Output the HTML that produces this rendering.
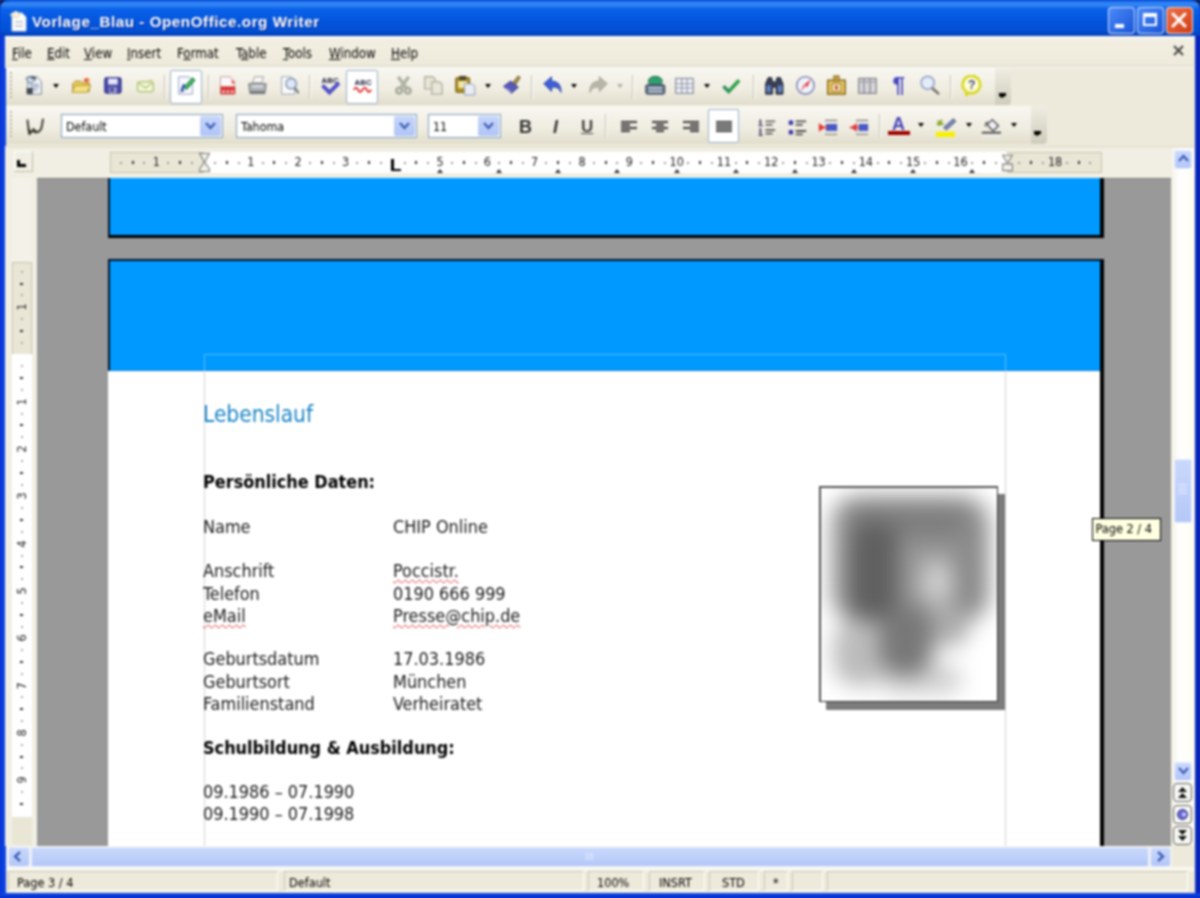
<!DOCTYPE html><html><head><meta charset="utf-8"><title>Vorlage_Blau - OpenOffice.org Writer</title><style>
html,body{margin:0;padding:0}
html{background:#0a3ad8;overflow:hidden}
body{width:1200px;height:898px;overflow:hidden;position:relative;background:#eeeadb;filter:blur(.9px);font-family:"DejaVu Sans Condensed","Liberation Sans",sans-serif;font-size:13px;color:#000}
div,span,svg{position:absolute;box-sizing:border-box}
.t{white-space:nowrap;line-height:1}
.t u{text-decoration:underline;text-underline-offset:1px}
#title{left:0;top:0;width:1200px;height:36px;background:linear-gradient(#0a5be0 0,#3a8cf5 4px,#0a62ea 9px,#0456dd 20px,#0350d6 30px,#0240b8 36px)}
#bl{left:0;top:36px;width:5.5px;height:862px;background:linear-gradient(90deg,#0834d4,#1048e8)}
#br{left:1194.5px;top:36px;width:5.5px;height:862px;background:linear-gradient(90deg,#0c30cc,#0618a4)}
#bb{left:0;top:892.5px;width:1200px;height:5.5px;background:linear-gradient(#1048e8,#0830c8)}
.wb{top:7px;width:27px;height:27px;border:1.5px solid rgba(255,255,255,.8);border-radius:4px}
.tb{background:linear-gradient(#f8f7f1,#efece0 60%,#e2decd);border-radius:0 4px 4px 0}
.sep{width:2px;height:24px;border-left:1px solid #c5c2b2;border-right:1px solid #fff}
.arr{width:0;height:0;border:3.5px solid transparent;border-top:4px solid #000;border-bottom:0}
.box{border:1px solid #98b0c8;background:#fff;border-radius:2px}
.combo{height:24.5px;border:1px solid #7f9db9;background:#fff}
.combo .btn{right:1px;top:1px;width:21px;height:20.5px;background:linear-gradient(#c6d6fb,#b0c4f5);border-radius:2px}
.doc{left:37px;top:177.5px;width:1133.5px;height:668px;background:#999;overflow:hidden}
.bt{font-size:17.9px;color:#1a1a1a}
.sq{text-decoration:underline wavy #e03030 1px;text-underline-offset:2px}
.sbtn{width:21px;height:20px;background:linear-gradient(#c9d8fc,#b4c7f7);border:1px solid #e8eeff;border-radius:3px}
.sf{top:871px;height:20px;border:1px solid #c9c5b2;border-right-color:#fff;border-bottom-color:#fff}
</style></head><body>
<div id="title"></div><div id="bl"></div><div id="br"></div><div id="bb"></div>
<div style="left:0;top:0;width:8px;height:8px;background:radial-gradient(circle at 100% 100%,transparent 7px,#0a1430 8.5px)"></div><div style="left:1192px;top:0;width:8px;height:8px;background:radial-gradient(circle at 0 100%,transparent 7px,#0a1430 8.5px)"></div>
<div style="left:5px;top:36px;width:1190px;height:30px;background:linear-gradient(#fdfcf8,#f2eee1 4px,#eeeadb)"></div>
<svg style="left:7px;top:8.5px" width="23" height="24" viewBox="0 0 23 24"><path d="M5 4h10l4 4v14H5z" fill="#fdfdf5" stroke="#cfd6e8"/><path d="M3 6l6-4 4 3-3 4z" fill="#f4f2e4" stroke="#d8d2b0"/><rect x="8" y="12" width="8" height="2" fill="#c8cfe0"/><rect x="8" y="16" width="8" height="2" fill="#c8cfe0"/></svg>
<span class="t" style="left:32px;top:13px;font:bold 15.2px 'Liberation Sans',sans-serif;letter-spacing:.55px;color:#fff;text-shadow:1px 1px 1px #0a2a8a">Vorlage_Blau - OpenOffice.org Writer</span>
<div class="wb" style="left:1108px;background:linear-gradient(135deg,#4a8af8,#1a55d8)"><div style="left:6px;top:16px;width:9px;height:4px;background:#fff"></div></div>
<div class="wb" style="left:1137px;background:linear-gradient(135deg,#4a8af8,#1a55d8)"><div style="left:5px;top:5px;width:14px;height:13px;border:2px solid #fff;border-top-width:4px"></div></div>
<div class="wb" style="left:1166px;background:linear-gradient(135deg,#ee7048,#d03c14)"><svg style="left:4px;top:4px" width="16" height="16" viewBox="0 0 16 16"><path d="M2 2l12 12M14 2L2 14" stroke="#fff" stroke-width="3" stroke-linecap="round"/></svg></div>
<span class="t" style="left:12px;top:47px;font-size:13.2px"><u>F</u>ile</span>
<span class="t" style="left:47px;top:47px;font-size:13.2px"><u>E</u>dit</span>
<span class="t" style="left:84px;top:47px;font-size:13.2px"><u>V</u>iew</span>
<span class="t" style="left:127px;top:47px;font-size:13.2px"><u>I</u>nsert</span>
<span class="t" style="left:177px;top:47px;font-size:13.2px">F<u>o</u>rmat</span>
<span class="t" style="left:236px;top:47px;font-size:13.2px">T<u>a</u>ble</span>
<span class="t" style="left:283px;top:47px;font-size:13.2px"><u>T</u>ools</span>
<span class="t" style="left:329px;top:47px;font-size:13.2px"><u>W</u>indow</span>
<span class="t" style="left:391px;top:47px;font-size:13.2px"><u>H</u>elp</span>
<svg style="left:1171px;top:43px" width="16" height="16" viewBox="0 0 16 16"><path d="M3 3l9 9M12 3L3 12" stroke="#444" stroke-width="2"/></svg>
<div style="left:5px;top:66px;width:1189px;height:1px;background:#d8d4c2"></div><div style="left:5px;top:67px;width:1189px;height:1px;background:#fff"></div>
<div class="tb" style="left:6px;top:68px;width:1005px;height:37px"></div>
<div class="tb" style="left:6px;top:106px;width:1041px;height:38px"></div>
<div style="left:10px;top:72px;width:2px;height:2px;background:#b8b4a0"></div>
<div style="left:10px;top:76px;width:2px;height:2px;background:#b8b4a0"></div>
<div style="left:10px;top:80px;width:2px;height:2px;background:#b8b4a0"></div>
<div style="left:10px;top:84px;width:2px;height:2px;background:#b8b4a0"></div>
<div style="left:10px;top:88px;width:2px;height:2px;background:#b8b4a0"></div>
<div style="left:10px;top:92px;width:2px;height:2px;background:#b8b4a0"></div>
<div style="left:10px;top:96px;width:2px;height:2px;background:#b8b4a0"></div>
<div style="left:10px;top:111px;width:2px;height:2px;background:#b8b4a0"></div>
<div style="left:10px;top:115px;width:2px;height:2px;background:#b8b4a0"></div>
<div style="left:10px;top:119px;width:2px;height:2px;background:#b8b4a0"></div>
<div style="left:10px;top:123px;width:2px;height:2px;background:#b8b4a0"></div>
<div style="left:10px;top:127px;width:2px;height:2px;background:#b8b4a0"></div>
<div style="left:10px;top:131px;width:2px;height:2px;background:#b8b4a0"></div>
<div style="left:10px;top:135px;width:2px;height:2px;background:#b8b4a0"></div>
<div style="left:995px;top:68px;width:16px;height:37px;background:linear-gradient(#efede2,#cfccbc);border-radius:0 4px 4px 0"></div><div style="left:998.5px;top:92.5px;width:7px;height:3px;background:#000"></div><div class="arr" style="left:999px;top:95.5px;border-width:3px;border-top-width:2.5px"></div>
<div style="left:1031px;top:106px;width:16px;height:38px;background:linear-gradient(#efede2,#cfccbc);border-radius:0 4px 4px 0"></div><div style="left:1033.5px;top:131px;width:7px;height:3px;background:#000"></div><div class="arr" style="left:1034px;top:134px;border-width:3px;border-top-width:2.5px"></div>
<svg style="left:23.6px;top:75.1px" width="20.9" height="20.9" viewBox="0 0 24 24"><path d="M4 2h11l5 5v15H4z" fill="#eef2f8" stroke="#6a7888"/><path d="M2 4l8-3 3 5-6 4z" fill="#cfdcee" stroke="#506078"/><path d="M7 11h10M7 14h10M7 17h8" stroke="#8a98b0" stroke-width="1.5"/><rect x="3" y="15" width="7" height="7" fill="#404850"/><path d="M8 3l6 1" stroke="#404850" stroke-width="2"/></svg>
<div class="arr" style="left:52.5px;top:84px"></div>
<svg style="left:70.6px;top:75.1px" width="20.9" height="20.9" viewBox="0 0 24 24"><path d="M2 10l3-3h6l2 2h8v10H2z" fill="#e8c860" stroke="#a08020"/><path d="M1 20l4-8h18l-5 8z" fill="#f4e080" stroke="#b09030"/><path d="M14 6q4-5 8 0l-3 1 1 3z" fill="#e86030"/></svg>
<svg style="left:101.6px;top:75.1px" width="20.9" height="20.9" viewBox="0 0 24 24"><rect x="3" y="3" width="19" height="18" rx="2" fill="#4848a8" stroke="#28287a"/><rect x="7" y="4" width="11" height="7" fill="#e4e4f8"/><rect x="8" y="14" width="9" height="7" fill="#9898d0"/><rect x="10" y="15" width="3" height="4" fill="#303070"/></svg>
<svg style="left:134.6px;top:75.1px" width="20.9" height="20.9" viewBox="0 0 24 24"><rect x="3" y="8" width="18" height="11" rx="2" fill="#f4f6e0" stroke="#a8c060" stroke-width="1.5"/><path d="M4 9l8 6 8-6" fill="none" stroke="#a8c060" stroke-width="1.3"/><path d="M15 6.5l5 0" stroke="#d0d890" stroke-width="2"/></svg>
<div class="sep" style="left:164px;top:75px"></div>
<div class="box" style="left:170px;top:70px;width:32px;height:34px"></div>
<svg style="left:175.6px;top:75.1px" width="20.9" height="20.9" viewBox="0 0 24 24"><path d="M3 2h12l4 4v16H3z" fill="#f8f8ff" stroke="#8898b8"/><path d="M5 18l3-8 6 3z" fill="#3050c0"/><path d="M9 14L19 3l3 3L12 17z" fill="#40b060" stroke="#207838"/><path d="M5 20l2-4 3 2z" fill="#203080"/></svg>
<div class="sep" style="left:208px;top:75px"></div>
<svg style="left:216.6px;top:75.1px" width="20.9" height="20.9" viewBox="0 0 24 24"><path d="M4 2h11l5 5v15H4z" fill="#fafafa" stroke="#c09090"/><path d="M12 2q6 3 5 8l4-1z" fill="#e04040"/><rect x="4" y="13" width="17" height="9" fill="#d83838"/><path d="M6 19h3M11 19h3M16 19h3" stroke="#fff" stroke-width="2"/></svg>
<svg style="left:246.6px;top:75.1px" width="20.9" height="20.9" viewBox="0 0 24 24"><path d="M6 9l3-7h10l-2 7z" fill="#f8f8f8" stroke="#909090"/><path d="M2 10h20l-1 9H3z" fill="#b0b4b8" stroke="#606468"/><path d="M3 19h18v3H3z" fill="#787c80"/><path d="M6 13h12" stroke="#e8e8e8" stroke-width="2"/></svg>
<svg style="left:278.6px;top:75.1px" width="20.9" height="20.9" viewBox="0 0 24 24"><path d="M3 2h11l4 4v16H3z" fill="#fafafa" stroke="#9098a8"/><circle cx="14" cy="10" r="6" fill="#dce8f8" stroke="#8090a8" stroke-width="1.6"/><path d="M18 15l5 6" stroke="#707880" stroke-width="2.6"/></svg>
<div class="sep" style="left:309px;top:75px"></div>
<svg style="left:318.7px;top:75.1px" width="22.6" height="20.9" viewBox="0 0 26 24"><text x="3" y="9" font-family="Liberation Sans,sans-serif" font-weight="bold" font-size="9" fill="#202040">ABC</text><path d="M4 12l8 8L23 9" fill="none" stroke="#5050c8" stroke-width="4.5"/></svg>
<div class="box" style="left:346px;top:70px;width:32px;height:34px"></div>
<svg style="left:351.6px;top:75.1px" width="20.9" height="20.9" viewBox="0 0 24 24"><text x="3" y="11" font-family="Liberation Sans,sans-serif" font-weight="bold" font-size="9" fill="#202040">ABC</text><path d="M2 17q3-5 5 0t5 0 5 0 5 0" fill="none" stroke="#e03030" stroke-width="2.2"/></svg>
<svg style="left:392.6px;top:75.1px" width="20.9" height="20.9" viewBox="0 0 24 24"><path d="M6 2l9 13M18 2L9 15" stroke="#b0b4a4" stroke-width="4"/><circle cx="7" cy="18" r="3.2" fill="none" stroke="#a8ac9c" stroke-width="3.2"/><circle cx="17" cy="18" r="3.2" fill="none" stroke="#a8ac9c" stroke-width="3.2"/></svg>
<svg style="left:422.6px;top:75.1px" width="20.9" height="20.9" viewBox="0 0 24 24"><path d="M2 2h9l3 3v11H2z" fill="#e8e6d8" stroke="#b0ae9c" stroke-width="1.5"/><path d="M10 8h9l3 3v11H10z" fill="#e8e6d8" stroke="#b0ae9c" stroke-width="1.5"/></svg>
<svg style="left:453.7px;top:75.1px" width="22.6" height="20.9" viewBox="0 0 26 24"><rect x="2" y="3" width="16" height="17" rx="1.5" fill="#b09020" stroke="#605010"/><rect x="6" y="1" width="8" height="5" fill="#504830"/><rect x="5" y="7" width="10" height="8" fill="#f0e8b0"/><path d="M12 10h9l3 3v10H12z" fill="#e8ecf4" stroke="#8890a8"/></svg>
<div class="arr" style="left:484.5px;top:84px"></div>
<svg style="left:500.6px;top:75.1px" width="20.9" height="20.9" viewBox="0 0 24 24"><path d="M3 13l8-6 9 7-8 7z" fill="#5858b8" stroke="#303080"/><path d="M14 8l6-7 2 2-5 8z" fill="#a89048" stroke="#605020"/><path d="M6 15l6 5" stroke="#9090e0" stroke-width="2"/></svg>
<div class="sep" style="left:531px;top:75px"></div>
<svg style="left:541.6px;top:75.1px" width="20.9" height="20.9" viewBox="0 0 24 24"><path d="M2 10l9-8v5q11 0 11 13q-3-7-11-6v5z" fill="#4060d8" stroke="#2840a8"/></svg>
<div class="arr" style="left:570.5px;top:84px"></div>
<svg style="left:587.6px;top:75.1px" width="20.9" height="20.9" viewBox="0 0 24 24"><path d="M22 10l-9-8v5q-11 0-11 13q3-7 11-6v5z" fill="#b8b6a6" stroke="#a09e8e"/></svg>
<div class="arr" style="left:616.5px;top:84px;border-top-color:#b0ae9e"></div>
<div class="sep" style="left:632px;top:75px"></div>
<svg style="left:643.7px;top:75.1px" width="22.6" height="20.9" viewBox="0 0 26 24"><ellipse cx="13" cy="7" rx="8" ry="5.5" fill="#30a070" stroke="#186040"/><rect x="2" y="11" width="22" height="11" rx="2" fill="#607088" stroke="#303848"/><path d="M5 15h16M5 19h16" stroke="#e0e8f0" stroke-width="1.6"/></svg>
<svg style="left:673.6px;top:75.1px" width="20.9" height="20.9" viewBox="0 0 24 24"><rect x="2" y="4" width="20" height="17" fill="#f4f4f8" stroke="#8890a0" stroke-width="1.5"/><path d="M2 10h20M2 15h20M9 4v17M15 4v17" stroke="#8890a0" stroke-width="1.3"/></svg>
<div class="arr" style="left:703.5px;top:84px"></div>
<svg style="left:719.7px;top:75.1px" width="22.6" height="20.9" viewBox="0 0 26 24"><path d="M4 13l6 6L22 6" fill="none" stroke="#30a048" stroke-width="4"/><path d="M4 13l6 6" fill="none" stroke="#4858b8" stroke-width="2" opacity=".5"/></svg>
<div class="sep" style="left:753px;top:75px"></div>
<svg style="left:762.7px;top:75.1px" width="22.6" height="20.9" viewBox="0 0 26 24"><path d="M3 22V10l3-7h4l1 5h4l1-5h4l3 7v12h-8v-8h-4v8z" fill="#384058" stroke="#181c28"/><rect x="4" y="12" width="5" height="8" fill="#6080c0"/><rect x="17" y="12" width="5" height="8" fill="#6080c0"/></svg>
<svg style="left:794.6px;top:75.1px" width="20.9" height="20.9" viewBox="0 0 24 24"><circle cx="12" cy="12" r="10" fill="#f0f2fa" stroke="#8088b8" stroke-width="1.8"/><path d="M18 5l-4 9-3-3z" fill="#e03838"/><path d="M6 19l4-9 3 3z" fill="#e89090"/></svg>
<svg style="left:825.6px;top:75.1px" width="20.9" height="20.9" viewBox="0 0 24 24"><rect x="2" y="6" width="20" height="16" fill="#e8c860" stroke="#806018" stroke-width="1.6"/><rect x="9" y="1" width="6" height="6" fill="#c0a040" stroke="#806018"/><rect x="7" y="10" width="10" height="9" fill="#fff8d8" stroke="#806018"/><rect x="10" y="12" width="4" height="5" fill="#d06030"/></svg>
<svg style="left:856.6px;top:75.1px" width="20.9" height="20.9" viewBox="0 0 24 24"><rect x="2" y="4" width="20" height="17" fill="#d8d8dc" stroke="#888890" stroke-width="1.6"/><path d="M8 4v17M15 4v17" stroke="#888890" stroke-width="1.6"/><path d="M2 8h20" stroke="#a8a8b0" stroke-width="2"/></svg>
<span class="t" style="left:892.5px;top:72px;font:bold 22.5px 'Liberation Sans',sans-serif;color:#4848c0">¶</span>
<svg style="left:918.7px;top:75.1px" width="22.6" height="20.9" viewBox="0 0 26 24"><circle cx="10" cy="9" r="7.5" fill="#e4ecfa" stroke="#98a8c8" stroke-width="2"/><path d="M15 15l8 7" stroke="#787068" stroke-width="3"/></svg>
<div class="sep" style="left:950px;top:75px"></div>
<svg style="left:960.7px;top:75.1px" width="22.6" height="20.9" viewBox="0 0 26 24"><path d="M12 1a10 10 0 1 1-3 19.5l-3 3 0-4.5A10 10 0 0 1 12 1z" fill="#fcfcd8" stroke="#d8d820" stroke-width="3"/><text x="8" y="16" font-family="Liberation Sans,sans-serif" font-weight="bold" font-size="14" fill="#404080">?</text></svg>
<svg style="left:23.7px;top:116.6px" width="22.6" height="20.9" viewBox="0 0 26 24"><path d="M4 3q1 12 3 16l4-5q5 7 9-1l2-11" fill="none" stroke="#48483e" stroke-width="2.4"/><path d="M4 13l5 3-4 5z" fill="#38382e"/><path d="M10 16l5 2" stroke="#38382e" stroke-width="2.4"/></svg>
<div class="combo" style="left:61px;top:113.5px;width:162px"><span class="t" style="left:4px;top:6px;font-size:12.4px">Default</span><div class="btn"><svg style="left:4px;top:5.5px" width="13" height="10" viewBox="0 0 13 10"><path d="M2 2l4.5 5L11 2" fill="none" stroke="#4060b8" stroke-width="2.4"/></svg></div></div>
<div class="combo" style="left:236px;top:113.5px;width:181px"><span class="t" style="left:4px;top:6px;font-size:12.4px">Tahoma</span><div class="btn"><svg style="left:4px;top:5.5px" width="13" height="10" viewBox="0 0 13 10"><path d="M2 2l4.5 5L11 2" fill="none" stroke="#4060b8" stroke-width="2.4"/></svg></div></div>
<div class="combo" style="left:428px;top:113.5px;width:73px"><span class="t" style="left:4px;top:6px;font-size:12.4px">11</span><div class="btn"><svg style="left:4px;top:5.5px" width="13" height="10" viewBox="0 0 13 10"><path d="M2 2l4.5 5L11 2" fill="none" stroke="#4060b8" stroke-width="2.4"/></svg></div></div>
<span class="t" style="left:519px;top:117px;font:bold 18px 'Liberation Sans',sans-serif;color:#333">B</span>
<span class="t" style="left:553px;top:117px;font:italic bold 18px 'Liberation Sans',sans-serif;color:#333">I</span>
<span class="t" style="left:581px;top:117px;font:bold 17px 'Liberation Sans',sans-serif;color:#444;text-decoration:underline">U</span>
<div class="sep" style="left:605px;top:114px"></div>
<svg style="left:620.0px;top:117.5px" width="18" height="18" viewBox="0 0 18 18"><path d="M1 4h16" stroke="#484848" stroke-width="2.2"/><path d="M1 7h9" stroke="#484848" stroke-width="2.2"/><path d="M1 10h16" stroke="#484848" stroke-width="2.2"/><path d="M1 13h9" stroke="#484848" stroke-width="2.2"/></svg>
<svg style="left:651.0px;top:117.5px" width="18" height="18" viewBox="0 0 18 18"><path d="M1 4h16" stroke="#484848" stroke-width="2.2"/><path d="M5 7h8" stroke="#484848" stroke-width="2.2"/><path d="M1 10h16" stroke="#484848" stroke-width="2.2"/><path d="M5 13h8" stroke="#484848" stroke-width="2.2"/></svg>
<svg style="left:682.0px;top:117.5px" width="18" height="18" viewBox="0 0 18 18"><path d="M1 4h16" stroke="#484848" stroke-width="2.2"/><path d="M8 7h9" stroke="#484848" stroke-width="2.2"/><path d="M1 10h16" stroke="#484848" stroke-width="2.2"/><path d="M8 13h9" stroke="#484848" stroke-width="2.2"/></svg>
<div class="box" style="left:708px;top:109px;width:31px;height:34px"></div>
<svg style="left:714.5px;top:117.5px" width="18" height="18" viewBox="0 0 18 18"><path d="M1 4h16" stroke="#484848" stroke-width="2.2"/><path d="M1 7h16" stroke="#484848" stroke-width="2.2"/><path d="M1 10h16" stroke="#484848" stroke-width="2.2"/><path d="M1 13h16" stroke="#484848" stroke-width="2.2"/></svg>
<svg style="left:755.6px;top:116.6px" width="20.9" height="20.9" viewBox="0 0 24 24"><path d="M5 3v7M5 13v8" stroke="#585878" stroke-width="2.4"/><path d="M3 10h5M3 21h5" stroke="#585878" stroke-width="1.5"/><path d="M11 5h11M11 9h8M11 15h11M11 19h8" stroke="#686868" stroke-width="2.2"/></svg>
<svg style="left:786.6px;top:116.6px" width="20.9" height="20.9" viewBox="0 0 24 24"><rect x="2" y="4" width="5" height="5" fill="#3838b0"/><rect x="2" y="15" width="5" height="5" fill="#3838b0"/><path d="M10 5h12M10 9h8M10 16h12M10 20h8" stroke="#505050" stroke-width="2.2"/></svg>
<svg style="left:817.6px;top:116.6px" width="20.9" height="20.9" viewBox="0 0 24 24"><path d="M8 4h14M8 20h14" stroke="#888" stroke-width="1.6"/><rect x="9" y="8" width="13" height="8" fill="#4858c8"/><path d="M8 12l-7-5v10z" fill="#e03838"/><path d="M1 12h10" stroke="#e03838" stroke-width="2"/></svg>
<svg style="left:848.6px;top:116.6px" width="20.9" height="20.9" viewBox="0 0 24 24"><path d="M8 4h14M8 20h14" stroke="#888" stroke-width="1.6"/><rect x="11" y="8" width="11" height="8" fill="#4858c8"/><path d="M10 12l-7-5v10z" fill="#e03838" transform="rotate(180 6 12)"/><path d="M1 12h10" stroke="#e03838" stroke-width="2"/></svg>
<div class="sep" style="left:879px;top:114px"></div>
<span class="t" style="left:892px;top:114px;font:bold 18px 'Liberation Sans',sans-serif;color:#4848b8">A</span>
<div style="left:887.5px;top:131px;width:22px;height:4px;background:#a00000"></div>
<div class="arr" style="left:917.5px;top:122.5px"></div>
<svg style="left:934.7px;top:116.6px" width="22.6" height="20.9" viewBox="0 0 26 24"><path d="M10 12L21 2l3 3-11 10z" fill="#7888b8" stroke="#404870"/><path d="M3 4l5 5M8 3l-4 7M2 8h8" stroke="#80a020" stroke-width="2"/><rect x="1" y="17" width="22" height="6" fill="#f8f000"/></svg>
<div class="arr" style="left:965.5px;top:122.5px"></div>
<svg style="left:980.7px;top:116.6px" width="22.6" height="20.9" viewBox="0 0 26 24"><path d="M7 9l6-6 7 7-6 6z" fill="#f0f0f4" stroke="#505058" stroke-width="1.6"/><path d="M8 6q-3 0-3 5" fill="none" stroke="#606068" stroke-width="1.6"/><path d="M1 18h22" stroke="#404040" stroke-width="2"/><rect x="1" y="20" width="22" height="3" fill="#e8e8e8"/></svg>
<div class="arr" style="left:1010.5px;top:122.5px"></div>
<div style="left:5px;top:146px;width:1190px;height:32px;background:linear-gradient(#dcd8c6,#f1efe3 2px)"></div><div style="left:5px;top:178px;width:32px;height:668px;background:#f1efe3"></div>
<div style="left:14px;top:151px;width:19px;height:21px;border:1px solid #fff;border-right-color:#c0bca8;border-bottom-color:#c0bca8"></div>
<div style="left:17px;top:159.5px;width:3px;height:7px;background:#000"></div><div style="left:17px;top:163.5px;width:9px;height:3px;background:#000"></div>
<div style="left:110px;top:152px;width:992px;height:21px;background:#e9e6d6;border:1px solid #c8c4b0"></div>
<div style="left:204px;top:152px;width:803px;height:21px;background:#fff"></div>
<div style="left:119.7px;top:162px;width:2px;height:2px;background:#999"></div>
<div style="left:131.6px;top:161px;width:2px;height:3px;background:#333"></div>
<div style="left:143.4px;top:162px;width:2px;height:2px;background:#999"></div>
<span class="t" style="left:152.7px;top:156px;font-size:12.5px;color:#222">1</span>
<div style="left:167.0px;top:162px;width:2px;height:2px;background:#999"></div>
<div style="left:178.8px;top:161px;width:2px;height:3px;background:#333"></div>
<div style="left:190.7px;top:162px;width:2px;height:2px;background:#999"></div>
<div style="left:214.3px;top:162px;width:2px;height:2px;background:#999"></div>
<div style="left:226.2px;top:161px;width:2px;height:3px;background:#333"></div>
<div style="left:238.0px;top:162px;width:2px;height:2px;background:#999"></div>
<span class="t" style="left:247.3px;top:156px;font-size:12.5px;color:#222">1</span>
<div style="left:261.6px;top:162px;width:2px;height:2px;background:#999"></div>
<div style="left:273.4px;top:161px;width:2px;height:3px;background:#333"></div>
<div style="left:285.3px;top:162px;width:2px;height:2px;background:#999"></div>
<span class="t" style="left:294.6px;top:156px;font-size:12.5px;color:#222">2</span>
<div style="left:308.9px;top:162px;width:2px;height:2px;background:#999"></div>
<div style="left:320.8px;top:161px;width:2px;height:3px;background:#333"></div>
<div style="left:332.6px;top:162px;width:2px;height:2px;background:#999"></div>
<span class="t" style="left:341.9px;top:156px;font-size:12.5px;color:#222">3</span>
<div style="left:356.2px;top:162px;width:2px;height:2px;background:#999"></div>
<div style="left:368.0px;top:161px;width:2px;height:3px;background:#333"></div>
<div style="left:379.9px;top:162px;width:2px;height:2px;background:#999"></div>
<div style="left:403.5px;top:162px;width:2px;height:2px;background:#999"></div>
<div style="left:415.4px;top:161px;width:2px;height:3px;background:#333"></div>
<div style="left:427.2px;top:162px;width:2px;height:2px;background:#999"></div>
<span class="t" style="left:436.5px;top:156px;font-size:12.5px;color:#222">5</span>
<div style="left:450.8px;top:162px;width:2px;height:2px;background:#999"></div>
<div style="left:462.6px;top:161px;width:2px;height:3px;background:#333"></div>
<div style="left:474.5px;top:162px;width:2px;height:2px;background:#999"></div>
<span class="t" style="left:483.8px;top:156px;font-size:12.5px;color:#222">6</span>
<div style="left:498.1px;top:162px;width:2px;height:2px;background:#999"></div>
<div style="left:509.9px;top:161px;width:2px;height:3px;background:#333"></div>
<div style="left:521.8px;top:162px;width:2px;height:2px;background:#999"></div>
<span class="t" style="left:531.1px;top:156px;font-size:12.5px;color:#222">7</span>
<div style="left:545.4px;top:162px;width:2px;height:2px;background:#999"></div>
<div style="left:557.2px;top:161px;width:2px;height:3px;background:#333"></div>
<div style="left:569.1px;top:162px;width:2px;height:2px;background:#999"></div>
<span class="t" style="left:578.4px;top:156px;font-size:12.5px;color:#222">8</span>
<div style="left:592.7px;top:162px;width:2px;height:2px;background:#999"></div>
<div style="left:604.5px;top:161px;width:2px;height:3px;background:#333"></div>
<div style="left:616.4px;top:162px;width:2px;height:2px;background:#999"></div>
<span class="t" style="left:625.7px;top:156px;font-size:12.5px;color:#222">9</span>
<div style="left:640.0px;top:162px;width:2px;height:2px;background:#999"></div>
<div style="left:651.8px;top:161px;width:2px;height:3px;background:#333"></div>
<div style="left:663.7px;top:162px;width:2px;height:2px;background:#999"></div>
<span class="t" style="left:669.5px;top:156px;font-size:12.5px;color:#222">10</span>
<div style="left:687.3px;top:162px;width:2px;height:2px;background:#999"></div>
<div style="left:699.1px;top:161px;width:2px;height:3px;background:#333"></div>
<div style="left:711.0px;top:162px;width:2px;height:2px;background:#999"></div>
<span class="t" style="left:716.8px;top:156px;font-size:12.5px;color:#222">11</span>
<div style="left:734.6px;top:162px;width:2px;height:2px;background:#999"></div>
<div style="left:746.4px;top:161px;width:2px;height:3px;background:#333"></div>
<div style="left:758.3px;top:162px;width:2px;height:2px;background:#999"></div>
<span class="t" style="left:764.1px;top:156px;font-size:12.5px;color:#222">12</span>
<div style="left:781.9px;top:162px;width:2px;height:2px;background:#999"></div>
<div style="left:793.8px;top:161px;width:2px;height:3px;background:#333"></div>
<div style="left:805.6px;top:162px;width:2px;height:2px;background:#999"></div>
<span class="t" style="left:811.4px;top:156px;font-size:12.5px;color:#222">13</span>
<div style="left:829.2px;top:162px;width:2px;height:2px;background:#999"></div>
<div style="left:841.0px;top:161px;width:2px;height:3px;background:#333"></div>
<div style="left:852.9px;top:162px;width:2px;height:2px;background:#999"></div>
<span class="t" style="left:858.7px;top:156px;font-size:12.5px;color:#222">14</span>
<div style="left:876.5px;top:162px;width:2px;height:2px;background:#999"></div>
<div style="left:888.3px;top:161px;width:2px;height:3px;background:#333"></div>
<div style="left:900.2px;top:162px;width:2px;height:2px;background:#999"></div>
<span class="t" style="left:906.0px;top:156px;font-size:12.5px;color:#222">15</span>
<div style="left:923.8px;top:162px;width:2px;height:2px;background:#999"></div>
<div style="left:935.6px;top:161px;width:2px;height:3px;background:#333"></div>
<div style="left:947.5px;top:162px;width:2px;height:2px;background:#999"></div>
<span class="t" style="left:953.3px;top:156px;font-size:12.5px;color:#222">16</span>
<div style="left:971.1px;top:162px;width:2px;height:2px;background:#999"></div>
<div style="left:982.9px;top:161px;width:2px;height:3px;background:#333"></div>
<div style="left:994.8px;top:162px;width:2px;height:2px;background:#999"></div>
<div style="left:1018.4px;top:162px;width:2px;height:2px;background:#999"></div>
<div style="left:1030.2px;top:161px;width:2px;height:3px;background:#333"></div>
<div style="left:1042.1px;top:162px;width:2px;height:2px;background:#999"></div>
<span class="t" style="left:1047.9px;top:156px;font-size:12.5px;color:#222">18</span>
<div style="left:1065.7px;top:162px;width:2px;height:2px;background:#999"></div>
<div style="left:1077.5px;top:161px;width:2px;height:3px;background:#333"></div>
<div style="left:1089.4px;top:162px;width:2px;height:2px;background:#999"></div>
<svg style="left:197.5px;top:151.5px" width="13" height="21" viewBox="0 0 16 24"><path d="M2 1h12l-5 9v3l5 7v3H2v-3l5-7v-3z" fill="#f4f2ea" stroke="#777" stroke-width="1.3"/></svg>
<svg style="left:1000.5px;top:151.5px" width="13" height="21" viewBox="0 0 16 24"><path d="M2 3h12l-5 8v3h5v8H2v-8h5v-3z" fill="#f4f2ea" stroke="#777" stroke-width="1.3"/></svg>
<div style="left:391px;top:159px;width:2.5px;height:12px;background:#000"></div><div style="left:391px;top:168.5px;width:10px;height:2.5px;background:#000"></div>
<div style="left:437.0px;top:169px;width:0;height:0;border:3px solid transparent;border-bottom:4px solid #333;border-top:0"></div>
<div style="left:496.1px;top:169px;width:0;height:0;border:3px solid transparent;border-bottom:4px solid #333;border-top:0"></div>
<div style="left:555.2px;top:169px;width:0;height:0;border:3px solid transparent;border-bottom:4px solid #333;border-top:0"></div>
<div style="left:614.4px;top:169px;width:0;height:0;border:3px solid transparent;border-bottom:4px solid #333;border-top:0"></div>
<div style="left:673.5px;top:169px;width:0;height:0;border:3px solid transparent;border-bottom:4px solid #333;border-top:0"></div>
<div style="left:732.6px;top:169px;width:0;height:0;border:3px solid transparent;border-bottom:4px solid #333;border-top:0"></div>
<div style="left:791.8px;top:169px;width:0;height:0;border:3px solid transparent;border-bottom:4px solid #333;border-top:0"></div>
<div style="left:850.9px;top:169px;width:0;height:0;border:3px solid transparent;border-bottom:4px solid #333;border-top:0"></div>
<div style="left:910.0px;top:169px;width:0;height:0;border:3px solid transparent;border-bottom:4px solid #333;border-top:0"></div>
<div style="left:969.1px;top:169px;width:0;height:0;border:3px solid transparent;border-bottom:4px solid #333;border-top:0"></div>
<div style="left:12px;top:178px;width:20px;height:667px;background:#f4f2e8"></div>
<div style="left:12px;top:354px;width:20px;height:463px;background:#fff"></div>
<div style="left:12px;top:262px;width:20px;height:92px;background:#e9e6d6;border:1px solid #c8c4b0;border-bottom:0"></div>
<div style="left:12px;top:817px;width:20px;height:28px;background:#e9e6d6"></div>
<div style="left:21px;top:270.7px;width:2px;height:2px;background:#aaa"></div>
<div style="left:20px;top:282.6px;width:3px;height:2px;background:#333"></div>
<div style="left:21px;top:294.4px;width:2px;height:2px;background:#aaa"></div>
<span class="t" style="left:17px;top:301.2px;width:10px;height:12px;font-size:12.5px;color:#222;transform:rotate(-90deg);text-align:center">1</span>
<div style="left:21px;top:318.0px;width:2px;height:2px;background:#aaa"></div>
<div style="left:20px;top:329.9px;width:3px;height:2px;background:#333"></div>
<div style="left:21px;top:341.7px;width:2px;height:2px;background:#aaa"></div>
<div style="left:21px;top:365.3px;width:2px;height:2px;background:#aaa"></div>
<div style="left:20px;top:377.1px;width:3px;height:2px;background:#333"></div>
<div style="left:21px;top:389.0px;width:2px;height:2px;background:#aaa"></div>
<span class="t" style="left:17px;top:395.8px;width:10px;height:12px;font-size:12.5px;color:#222;transform:rotate(-90deg);text-align:center">1</span>
<div style="left:21px;top:412.6px;width:2px;height:2px;background:#aaa"></div>
<div style="left:20px;top:424.4px;width:3px;height:2px;background:#333"></div>
<div style="left:21px;top:436.3px;width:2px;height:2px;background:#aaa"></div>
<span class="t" style="left:17px;top:443.1px;width:10px;height:12px;font-size:12.5px;color:#222;transform:rotate(-90deg);text-align:center">2</span>
<div style="left:21px;top:459.9px;width:2px;height:2px;background:#aaa"></div>
<div style="left:20px;top:471.8px;width:3px;height:2px;background:#333"></div>
<div style="left:21px;top:483.6px;width:2px;height:2px;background:#aaa"></div>
<span class="t" style="left:17px;top:490.4px;width:10px;height:12px;font-size:12.5px;color:#222;transform:rotate(-90deg);text-align:center">3</span>
<div style="left:21px;top:507.2px;width:2px;height:2px;background:#aaa"></div>
<div style="left:20px;top:519.0px;width:3px;height:2px;background:#333"></div>
<div style="left:21px;top:530.9px;width:2px;height:2px;background:#aaa"></div>
<span class="t" style="left:17px;top:537.7px;width:10px;height:12px;font-size:12.5px;color:#222;transform:rotate(-90deg);text-align:center">4</span>
<div style="left:21px;top:554.5px;width:2px;height:2px;background:#aaa"></div>
<div style="left:20px;top:566.4px;width:3px;height:2px;background:#333"></div>
<div style="left:21px;top:578.2px;width:2px;height:2px;background:#aaa"></div>
<span class="t" style="left:17px;top:585.0px;width:10px;height:12px;font-size:12.5px;color:#222;transform:rotate(-90deg);text-align:center">5</span>
<div style="left:21px;top:601.8px;width:2px;height:2px;background:#aaa"></div>
<div style="left:20px;top:613.6px;width:3px;height:2px;background:#333"></div>
<div style="left:21px;top:625.5px;width:2px;height:2px;background:#aaa"></div>
<span class="t" style="left:17px;top:632.3px;width:10px;height:12px;font-size:12.5px;color:#222;transform:rotate(-90deg);text-align:center">6</span>
<div style="left:21px;top:649.1px;width:2px;height:2px;background:#aaa"></div>
<div style="left:20px;top:661.0px;width:3px;height:2px;background:#333"></div>
<div style="left:21px;top:672.8px;width:2px;height:2px;background:#aaa"></div>
<span class="t" style="left:17px;top:679.6px;width:10px;height:12px;font-size:12.5px;color:#222;transform:rotate(-90deg);text-align:center">7</span>
<div style="left:21px;top:696.4px;width:2px;height:2px;background:#aaa"></div>
<div style="left:20px;top:708.2px;width:3px;height:2px;background:#333"></div>
<div style="left:21px;top:720.1px;width:2px;height:2px;background:#aaa"></div>
<span class="t" style="left:17px;top:726.9px;width:10px;height:12px;font-size:12.5px;color:#222;transform:rotate(-90deg);text-align:center">8</span>
<div style="left:21px;top:743.7px;width:2px;height:2px;background:#aaa"></div>
<div style="left:20px;top:755.5px;width:3px;height:2px;background:#333"></div>
<div style="left:21px;top:767.4px;width:2px;height:2px;background:#aaa"></div>
<span class="t" style="left:17px;top:774.2px;width:10px;height:12px;font-size:12.5px;color:#222;transform:rotate(-90deg);text-align:center">9</span>
<div style="left:21px;top:791.0px;width:2px;height:2px;background:#aaa"></div>
<div style="left:20px;top:802.8px;width:3px;height:2px;background:#333"></div>
<div class="doc">
<div style="left:-37px;top:-177.5px;width:1200px;height:898px">
<div style="left:37px;top:177.5px;width:1134px;height:1.5px;background:#7c7c7c"></div>
<div style="left:108px;top:100px;width:996px;height:137.5px;background:#09f;border-left:2.5px solid #00142c;border-right:4px solid #000;border-bottom:3px solid #000"></div>
<div style="left:108px;top:258.5px;width:996px;height:700px;background:#fff;border-top:2.5px solid #00142c;border-right:4px solid #000"><div style="left:0;top:0;width:992px;height:110px;background:#09f;border-left:2.5px solid #00142c;border-bottom:1px solid #0a80d8"></div></div>
<div style="left:204px;top:354px;width:802px;height:18px;border:1px solid rgba(255,255,255,.35);border-bottom:0"></div>
<div style="left:204px;top:372px;width:802px;height:480px;border:1px solid #d4d4d4;border-top:0"></div>
<span class="t" style="left:203px;top:403.0px;font-size:22.5px;color:#1a84c6">Lebenslauf</span>
<span class="t" style="left:203px;top:472.9px;font-size:17.9px;font-weight:bold">Persönliche Daten:</span>
<span class="t bt" style="left:203px;top:517.9px;font-size:17.9px;">Name</span>
<span class="t bt" style="left:393px;top:517.9px;font-size:17.9px;">CHIP Online</span>
<span class="t bt" style="left:203px;top:561.9px;font-size:17.9px;">Anschrift</span>
<span class="t bt sq" style="left:393px;top:561.9px;font-size:17.9px;">Poccistr.</span>
<span class="t bt" style="left:203px;top:584.9px;font-size:17.9px;">Telefon</span>
<span class="t bt" style="left:393px;top:584.9px;font-size:17.9px;">0190 666 999</span>
<span class="t bt sq" style="left:203px;top:606.9px;font-size:17.9px;">eMail</span>
<span class="t bt sq" style="left:393px;top:606.9px;font-size:17.9px;">Presse@chip.de</span>
<span class="t bt" style="left:203px;top:649.9px;font-size:17.9px;">Geburtsdatum</span>
<span class="t bt" style="left:393px;top:649.9px;font-size:17.9px;">17.03.1986</span>
<span class="t bt" style="left:203px;top:672.9px;font-size:17.9px;">Geburtsort</span>
<span class="t bt" style="left:393px;top:672.9px;font-size:17.9px;">München</span>
<span class="t bt" style="left:203px;top:694.9px;font-size:17.9px;">Familienstand</span>
<span class="t bt" style="left:393px;top:694.9px;font-size:17.9px;">Verheiratet</span>
<span class="t" style="left:203px;top:738.9px;font-size:17.9px;font-weight:bold">Schulbildung &amp; Ausbildung:</span>
<span class="t bt" style="left:203px;top:782.9px;font-size:17.9px;">09.1986 – 07.1990</span>
<span class="t bt" style="left:203px;top:804.9px;font-size:17.9px;">09.1990 – 07.1998</span>
<div style="left:819px;top:485.5px;width:179px;height:216px;background:#fff;border:1px solid #333;border-top:2px solid #555;border-left:2px solid #555;box-shadow:7px 8px 0 #7c7c7c;overflow:hidden"><div style="left:0;top:0;width:176px;height:213px;filter:blur(10.5px)"><div style="left:10px;top:8px;width:158px;height:126px;background:#989898;border-radius:26px"></div><div style="left:26px;top:14px;width:124px;height:38px;background:#7e7e7e;border-radius:18px"></div><div style="left:136px;top:26px;width:30px;height:100px;background:#8a8a8a;border-radius:15px"></div><div style="left:28px;top:34px;width:50px;height:100px;background:#606060;border-radius:22px"></div><div style="left:12px;top:132px;width:56px;height:66px;background:#bcbcbc;border-radius:24px"></div><div style="left:60px;top:176px;width:80px;height:30px;background:#d0d0d0;border-radius:14px"></div><div style="left:104px;top:118px;width:44px;height:40px;background:#acacac;border-radius:18px"></div><div style="left:58px;top:118px;width:54px;height:70px;background:#787878;border-radius:24px"></div><div style="left:101px;top:72px;width:30px;height:44px;background:#d0d0d0;border-radius:15px"></div></div></div>
</div>
</div>
<div style="left:1172px;top:148px;width:22px;height:697px;background:linear-gradient(90deg,#f4f3ea,#fff 35%,#fdfcf2)"></div>
<div class="sbtn" style="left:1174px;top:149.5px;width:18px;height:19px"></div>
<svg style="left:1176.5px;top:152.5px" width="13" height="13" viewBox="0 0 13 13"><path d="M2 8l4.5-5L11 8" fill="none" stroke="#4060b8" stroke-width="2.4"/></svg>
<div class="sbtn" style="left:1174px;top:459px;width:18px;height:64px;border-radius:2px"></div>
<div style="left:1178px;top:484px;width:9px;height:1px;background:#e8eeff"></div>
<div style="left:1178px;top:487px;width:9px;height:1px;background:#e8eeff"></div>
<div style="left:1178px;top:490px;width:9px;height:1px;background:#e8eeff"></div>
<div style="left:1178px;top:493px;width:9px;height:1px;background:#e8eeff"></div>
<div class="sbtn" style="left:1174px;top:762px;width:18px;height:19px"></div>
<svg style="left:1176.5px;top:765px" width="13" height="13" viewBox="0 0 13 13"><path d="M2 3l4.5 5L11 3" fill="none" stroke="#4060b8" stroke-width="2.4"/></svg>
<div style="left:1173px;top:783px;width:19px;height:19px;border:1.5px solid #5a5a58;border-radius:4px;background:#f6f6f2"></div>
<svg style="left:1176.0px;top:786.0px" width="13" height="13" viewBox="0 0 13 13"><path d="M2 6l4.5-5L11 6zM2 12l4.5-5L11 12z" fill="#111"/></svg>
<div style="left:1173px;top:805px;width:19px;height:19px;border:1.5px solid #5a5a58;border-radius:4px;background:#f6f6f2"></div>
<svg style="left:1176.0px;top:808.0px" width="13" height="13" viewBox="0 0 13 13"><circle cx="6.5" cy="6.5" r="5" fill="#6868d0" stroke="#303088"/><circle cx="8" cy="6.5" r="2" fill="#d0d0ff"/></svg>
<div style="left:1173px;top:826px;width:19px;height:19px;border:1.5px solid #5a5a58;border-radius:4px;background:#f6f6f2"></div>
<svg style="left:1176.0px;top:829.0px" width="13" height="13" viewBox="0 0 13 13"><path d="M2 1l4.5 5L11 1zM2 7l4.5 5L11 7z" fill="#111"/></svg>
<div style="left:6px;top:846px;width:1166px;height:22px;background:#f4f3ec"></div><div style="left:6px;top:867px;width:1188px;height:4px;background:#f9f8f1"></div>
<div class="sbtn" style="left:8px;top:847px;width:22px"></div>
<svg style="left:12px;top:850px" width="13" height="13" viewBox="0 0 13 13"><path d="M8 2L3 6.5 8 11" fill="none" stroke="#4060b8" stroke-width="2.4"/></svg>
<div class="sbtn" style="left:31px;top:847px;width:1118px;height:19.5px;border-radius:2px"></div>
<div style="left:586px;top:853px;width:1px;height:7px;background:#e8eeff"></div>
<div style="left:589px;top:853px;width:1px;height:7px;background:#e8eeff"></div>
<div style="left:592px;top:853px;width:1px;height:7px;background:#e8eeff"></div>
<div class="sbtn" style="left:1150px;top:847px;width:21px"></div>
<svg style="left:1154px;top:850px" width="13" height="13" viewBox="0 0 13 13"><path d="M4 2l5 4.5L4 11" fill="none" stroke="#4060b8" stroke-width="2.4"/></svg>
<div style="left:1092px;top:518px;width:69px;height:23px;background:#ffffe1;border:1.5px solid #000"><span class="t" style="left:2.5px;top:3.5px;font-size:12.6px">Page 2 / 4</span></div>
<div class="sf" style="left:8px;width:270px"><span class="t" style="left:8px;top:4.5px;font-size:12.6px">Page 3 / 4</span></div>
<div class="sf" style="left:284px;width:300px"><span class="t" style="left:4px;top:4.5px;font-size:12.6px">Default</span></div>
<div class="sf" style="left:588px;width:56px"><span class="t" style="left:8px;top:4.5px;font-size:12.6px">100%</span></div>
<div class="sf" style="left:649px;width:56px"><span class="t" style="left:9px;top:4.5px;font-size:12.6px">INSRT</span></div>
<div class="sf" style="left:709px;width:50px"><span class="t" style="left:12px;top:4.5px;font-size:12.6px">STD</span></div>
<div class="sf" style="left:764px;width:24px"><span class="t" style="left:8px;top:4.5px;font-size:12.6px">*</span></div>
<div class="sf" style="left:792px;width:31px"><span class="t" style="left:0px;top:4.5px;font-size:12.6px"></span></div>
<div class="sf" style="left:827px;width:361px"><span class="t" style="left:0px;top:4.5px;font-size:12.6px"></span></div>
</body></html>
